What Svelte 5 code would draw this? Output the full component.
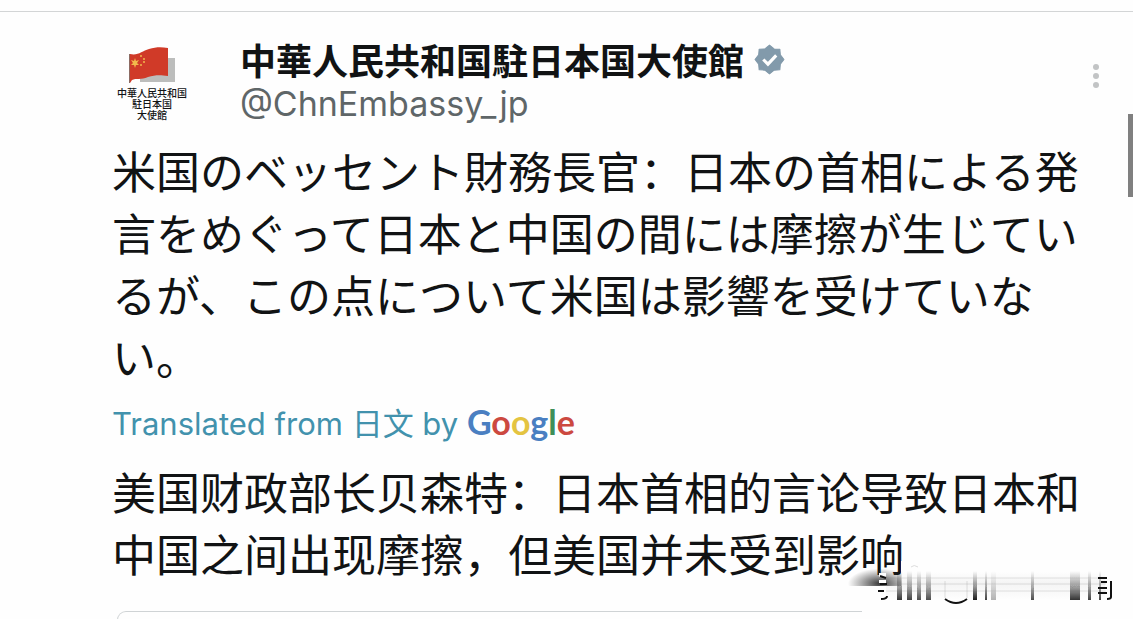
<script lang="ts">
	const author = {
		name: '中華人民共和国駐日本国大使館',
		handle: '@ChnEmbassy_jp',
	};

	const original =
		'米国のベッセント財務長官：日本の首相による発言をめぐって日本と中国の間には摩擦が生じているが、この点について米国は影響を受けていない。';
	const translation =
		'美国财政部长贝森特：日本首相的言论导致日本和中国之间出现摩擦，但美国并未受到影响。';

	const googleLetters = [
		{ letter: 'G', color: '#4a7fc1' },
		{ letter: 'o', color: '#cc4940' },
		{ letter: 'o', color: '#e4c441' },
		{ letter: 'g', color: '#4a7fc1' },
		{ letter: 'l', color: '#3f8f58' },
		{ letter: 'e', color: '#cc4940' },
	];

	// Vertical strokes of the smeared stamp in the corner
	const smears = [
		{ x: 57, width: 5, opacity: 0.85 },
		{ x: 67, width: 5, opacity: 0.8 },
		{ x: 77, width: 4, opacity: 0.75 },
		{ x: 86, width: 5, opacity: 0.75 },
		{ x: 133, width: 4, opacity: 0.95 },
		{ x: 145, width: 2, opacity: 0.8 },
		{ x: 151, width: 5, opacity: 0.3 },
		{ x: 191, width: 3, opacity: 0.75 },
		{ x: 230, width: 10, opacity: 0.85 },
		{ x: 248, width: 3, opacity: 0.8 },
		{ x: 259, width: 2, opacity: 0.8 },
	];
</script>

<main class="page">
	<article class="post">
		<header>
			<a class="avatar" href="#profile" aria-label={author.name}>
				<svg viewBox="0 0 50 38" aria-hidden="true">
					<path d="M13 12h35v24H13z" fill="#bcbdbc" />
					<path
						d="M3 8c8 2 12-3 19-5 7-2 12-2 19-1v28c-8-1-13-1-20 1-7 3-12 1-16 3l-2 3z"
						fill="#d03a28"
					/>
					<path d="M2 8h1v29H2z" fill="#8c6b63" />
					<path
						d="m8 12 1 3 3-1-2 3 2 2-3 0-1 3-1-3-3 0 2-2-2-3 3 1z"
						fill="#f2b84b"
					/>
					<g fill="#f2b84b">
						<circle cx="14" cy="10" r="1" />
						<circle cx="17" cy="13" r="1" />
						<circle cx="17" cy="16" r="1" />
						<circle cx="14" cy="19" r="1" />
					</g>
				</svg>
				<span>中華人民共和国</span>
				<span>駐日本国</span>
				<span>大使館</span>
			</a>
			<div class="author">
				<div class="name">
					<h1>{author.name}</h1>
					<svg viewBox="0 0 30 30" role="img" aria-label="Verified">
						<path
							d="m15 1 4.500 3.800 5.500.2.500 5.500L29 15l-3.500 4.500-.5 5.500-5.500.3L15 29l-4.500-3.700L5 25l-.5-5.500L1 15l3.500-4.500L5 5l5.500-.2z"
							fill="#829aab"
							stroke="#829aab"
							stroke-linejoin="round"
						/>
						<path d="m9 15 4.500 4.500L21.500 11" fill="none" stroke="#fff" stroke-width="3" />
					</svg>
				</div>
				<a class="handle" href="#profile">{author.handle}</a>
			</div>
			<button class="more" type="button" aria-label="More">
				<svg viewBox="0 0 6 24" aria-hidden="true">
					<circle cx="3" cy="3" r="3" />
					<circle cx="3" cy="12" r="3" />
					<circle cx="3" cy="21" r="3" />
				</svg>
			</button>
		</header>

		<p class="text">{original}</p>
		<a class="source" href="#translation">
			Translated from 日文 by
			<span class="google">{#each googleLetters as { letter, color }}<span style:color>{letter}</span>{/each}</span>
		</a>
		<p class="text" lang="zh-Hans">{translation}</p>
		<div class="card"></div>
	</article>

	<div class="scroll-thumb"></div>

	<svg class="stamp" viewBox="0 0 293 79" aria-hidden="true">
		<defs>
			<linearGradient id="smear" x1="0" y1="0" x2="0" y2="1">
				<stop offset="0" stop-color="#111" stop-opacity="0" />
				<stop offset="0.500" stop-color="#111" stop-opacity="0.400" />
				<stop offset="1" stop-color="#111" />
			</linearGradient>
			<radialGradient id="shade" cx="0.600" cy="0.900" r="0.600">
				<stop offset="0" stop-color="#222" stop-opacity="0.900" />
				<stop offset="1" stop-color="#333" stop-opacity="0" />
			</radialGradient>
			<linearGradient id="haze" x1="0" y1="0" x2="0" y2="1">
				<stop offset="0" stop-color="#fefefe" />
				<stop offset="0.400" stop-color="#f4f4f4" />
				<stop offset="1" stop-color="#fefefe" />
			</linearGradient>
			<filter id="soft"><feGaussianBlur stdDeviation="0.700" /></filter>
		</defs>
		<path d="M8 45h285v34H22V45z" fill="#fefefe" />
		<path d="M61 20h232v26H61z" fill="#fefefe" />
		<path d="M8 20h53v25H8z" fill="url(#shade)" />
		<path d="M61 31h204v28H46V45h15z" fill="url(#haze)" />
		<path d="M71 26q3-3 7 0" fill="none" stroke="#ddd" />
		<g filter="url(#soft)">
			{#each smears as smear}
				<rect x={smear.x} y="30" width={smear.width} height="29" fill="url(#smear)" opacity={smear.opacity} />
			{/each}
			<path d="M46 37h220M46 43h220M46 50h220" stroke="#777" opacity="0.200" />
			<path d="M105 40v17M127 40v17" stroke="#999" opacity="0.300" />
		</g>
		<path d="M39 32h7v4h-7zM39 39h7v3h-7z" fill="#fefefe" />
		<path
			d="m40 35 6 2M40 43h7M38 50h6M41 58q6 0 6-3M105 58q11 8 22 0M258 37h9M261 41h6M258 47h9M258 52h9M271 40v16q0 2-4 2"
			fill="none"
			stroke="#111"
			stroke-width="2"
		/>
	</svg>
</main>

<style>
	:global(body) {
		margin: 0;
		background: #fefefe;
	}

	.page {
		position: relative;
		box-sizing: border-box;
		display: flex;
		min-height: 100vh;
		padding-top: 11px;
		overflow: hidden;
		color: #111314;
		font-family: Inter, 'Noto Sans CJK SC', sans-serif;
	}

	.post {
		flex: 1;
		display: flex;
		flex-direction: column;
		padding: 25px 50px 0 112px;
		border-top: 1px solid #d3d5d6;
	}

	header {
		display: flex;
		align-items: flex-start;
		height: 102px;
	}

	a {
		color: inherit;
		text-decoration: none;
	}

	.avatar {
		display: flex;
		flex-direction: column;
		align-items: center;
		width: 80px;
		margin-right: 48px;
		padding-top: 9px;
		font: 500 10px/11px 'Noto Sans CJK JP', sans-serif;
	}

	.avatar svg {
		width: 50px;
		height: 38px;
		margin-bottom: 3px;
	}

	.avatar span {
		white-space: nowrap;
	}

	.author {
		flex: 1;
	}

	.name {
		display: flex;
		align-items: center;
		gap: 10px;
	}

	.name svg {
		width: 31px;
		height: 31px;
	}

	h1 {
		margin: 0;
		font: 700 36px/44px 'Noto Sans CJK JP', sans-serif;
	}

	.handle {
		display: block;
		color: #5f6668;
		font-size: 34px;
		line-height: 46px;
	}

	.more {
		margin: 27px -28px 0 0;
		padding: 0 12px;
		border: 0;
		background: none;
		cursor: pointer;
	}

	.more svg {
		display: block;
		width: 6px;
		height: 24px;
		fill: #c2c4c5;
	}

	.text {
		margin: 0;
		font: 400 44px/62px 'Noto Sans CJK SC', sans-serif;
	}

	.source {
		margin: 6px 0 5px;
		color: #4292ad;
		font-size: 31px;
		line-height: 62px;
		white-space: nowrap;
	}

	.google {
		font-family: Lato, sans-serif;
		font-size: 34px;
		font-weight: 700;
		line-height: 1;
	}

	.card {
		flex: 1;
		min-height: 8px;
		margin: 27px 0 0 5px;
		border: 1px solid #cfd3d5;
		border-bottom: 0;
		border-radius: 18px 18px 0 0;
	}

	.scroll-thumb {
		position: absolute;
		top: 114px;
		right: 0;
		width: 5px;
		height: 83px;
		background: #808080;
	}

	.stamp {
		position: absolute;
		right: 0;
		bottom: 0;
		width: 293px;
		height: 79px;
	}
</style>
